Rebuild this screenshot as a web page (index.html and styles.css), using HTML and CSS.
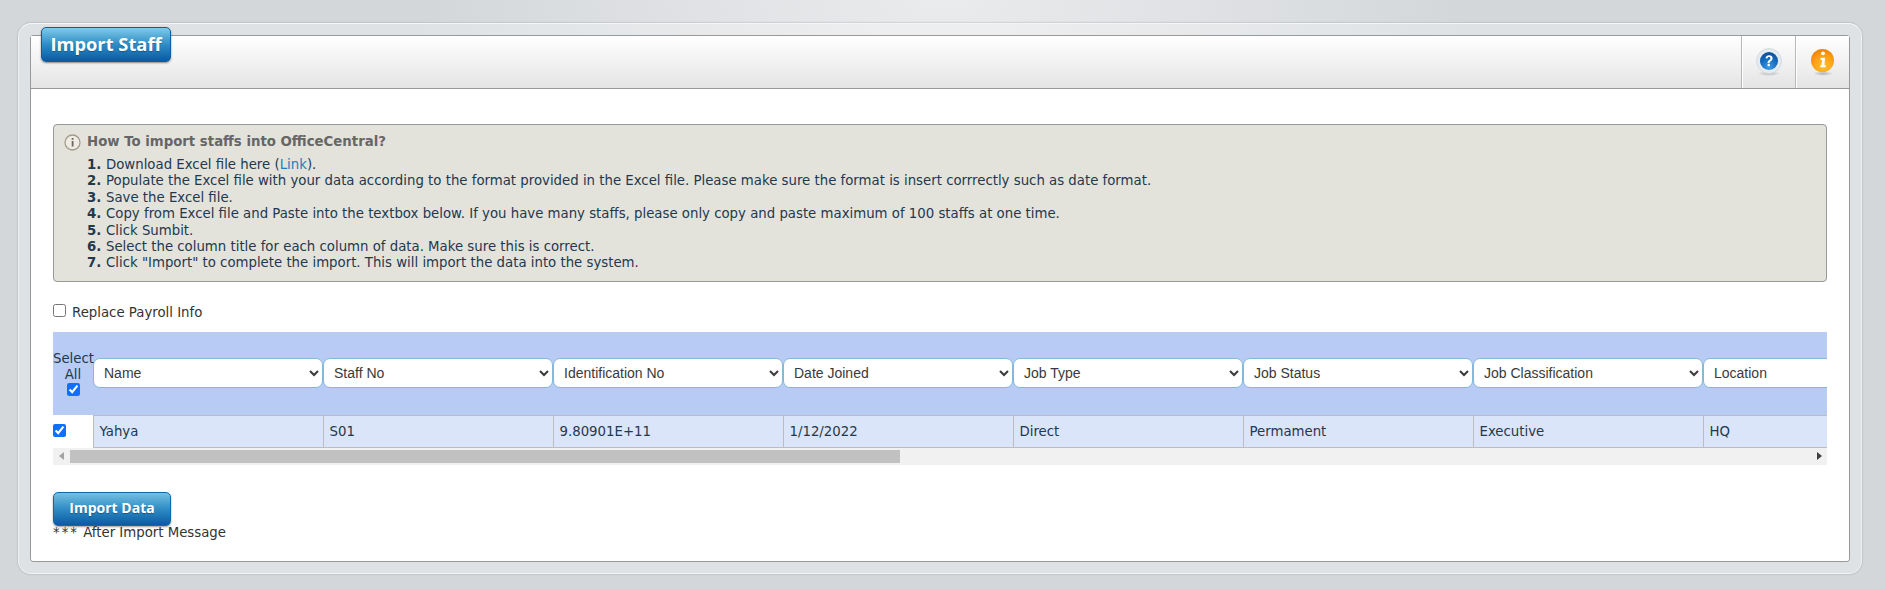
FILE: index.html
```html
<!DOCTYPE html>
<html lang="en">
<head>
<meta charset="utf-8">
<title>Import Staff</title>
<link rel="stylesheet" href="styles.css">
</head>
<body>
<div class="outer">
  <div class="panel">
    <h1 class="title">Import Staff</h1>
    <div class="head">
      <div class="tool">
        <svg width="26" height="28" viewBox="0 0 26 28">
          <defs>
            <radialGradient id="qb" cx="0.5" cy="0.85" r="0.8"><stop offset="0" stop-color="#3d9be8"/><stop offset="0.6" stop-color="#136cc0"/><stop offset="1" stop-color="#0d4f9c"/></radialGradient>
            <radialGradient id="sh" cx="0.5" cy="0.5" r="0.5"><stop offset="0" stop-color="#999" stop-opacity=".7"/><stop offset="1" stop-color="#999" stop-opacity="0"/></radialGradient>
          </defs>
          <ellipse cx="13" cy="25.500" rx="11" ry="2.500" fill="url(#sh)"/>
          <circle cx="13" cy="13" r="12.500" fill="#e6ebef" stroke="#d5dade" stroke-width="1"/>
          <circle cx="13" cy="13" r="9" fill="url(#qb)"/>
          <path d="M9.500 10.200c.3-2 1.800-3 3.600-3 2.100 0 3.500 1.200 3.500 3 0 1.500-.9 2.200-1.900 3-.8.6-1.100 1-1.100 2h-2c0-1.600.6-2.400 1.600-3.100.8-.6 1.200-1 1.200-1.700 0-.8-.6-1.300-1.400-1.300-.9 0-1.400.6-1.600 1.400z" fill="#fff"/>
          <rect x="11.600" y="16" width="2.200" height="2.200" fill="#fff"/>
        </svg>
      </div>
      <div class="tool">
        <svg width="26" height="28" viewBox="0 0 26 28">
          <defs>
            <radialGradient id="oc" cx="0.55" cy="0.75" r="0.8"><stop offset="0" stop-color="#ffc02e"/><stop offset="0.65" stop-color="#fb9a10"/><stop offset="1" stop-color="#e87a06"/></radialGradient>
            <radialGradient id="sh2" cx="0.5" cy="0.5" r="0.5"><stop offset="0" stop-color="#999" stop-opacity=".7"/><stop offset="1" stop-color="#999" stop-opacity="0"/></radialGradient>
          </defs>
          <ellipse cx="13" cy="25.500" rx="10" ry="2.500" fill="url(#sh2)"/>
          <circle cx="12.500" cy="12.500" r="11.500" fill="url(#oc)"/>
          <circle cx="13" cy="5.300" r="1.900" fill="#fff"/>
          <path d="M10.600 9.800h4.400l-.6 7.400h1.300v2.100h-5.400v-2.100h1.300l.4-5.300h-1.400z" fill="#fff"/>
        </svg>
      </div>
    </div>
    <div class="body">
      <div class="howto">
        <div class="howto-title">
          <svg class="howto-icon" width="17" height="17" viewBox="0 0 17 17">
            <circle cx="8.500" cy="8.500" r="7.500" fill="#eeece4" stroke="#a39c8b" stroke-width="1.300"/>
            <rect x="7.700" y="4" width="1.800" height="1.800" fill="#6f675a"/>
            <rect x="7.700" y="7" width="1.800" height="5.500" fill="#6f675a"/>
          </svg>
          <span>How To import staffs into OfficeCentral?</span>
        </div>
        <ol class="steps">
          <li>Download Excel file here (<a class="link" href="#">Link</a>).</li>
          <li>Populate the Excel file with your data according to the format provided in the Excel file. Please make sure the format is insert corrrectly such as date format.</li>
          <li>Save the Excel file.</li>
          <li>Copy from Excel file and Paste into the textbox below. If you have many staffs, please only copy and paste maximum of 100 staffs at one time.</li>
          <li>Click Sumbit.</li>
          <li>Select the column title for each column of data. Make sure this is correct.</li>
          <li>Click "Import" to complete the import. This will import the data into the system.</li>
        </ol>
      </div>
      <label class="replace"><input type="checkbox" class="check">Replace Payroll Info</label>
      <div class="scroller">
        <table class="grid">
          <colgroup>
            <col class="col-sel"><col class="col"><col class="col"><col class="col"><col class="col"><col class="col"><col class="col"><col class="col"><col class="col">
          </colgroup>
          <thead>
            <tr>
              <th class="sel-head">Select All<br><input type="checkbox" class="check" checked></th>
              <th><select class="pick"><option>Name</option></select></th>
              <th><select class="pick"><option>Staff No</option></select></th>
              <th><select class="pick"><option>Identification No</option></select></th>
              <th><select class="pick"><option>Date Joined</option></select></th>
              <th><select class="pick"><option>Job Type</option></select></th>
              <th><select class="pick"><option>Job Status</option></select></th>
              <th><select class="pick"><option>Job Classification</option></select></th>
              <th><select class="pick"><option>Location</option></select></th>
            </tr>
          </thead>
          <tbody>
            <tr>
              <td class="sel-cell"><input type="checkbox" class="check" checked></td>
              <td>Yahya</td><td>S01</td><td>9.80901E+11</td><td>1/12/2022</td><td>Direct</td><td>Permament</td><td>Executive</td><td>HQ</td>
            </tr>
          </tbody>
        </table>
      </div>
      <div class="hbar">
        <span class="arrow-left"></span>
        <div class="thumb"></div>
        <span class="arrow-right"></span>
      </div>
      <button class="import" type="button">Import Data</button>
      <div class="msg"><span class="stars">***</span> After Import Message</div>
    </div>
  </div>
</div>
</body>
</html>
```
FILE: styles.css
```css
* { box-sizing: border-box; }
html, body { margin: 0; height: 100%; }
body {
  background: #d4d7da radial-gradient(ellipse 520px 240px at 50% 0, #eaebed, #d4d7da);
  font-family: "DejaVu Sans", Verdana, sans-serif;
  font-size: 13.300px;
  color: #23384d;
  overflow: hidden;
}
.outer {
  margin: 23px 23px 0 18px;
  height: 551px;
  padding: 11px;
  background: #dfe2e5 radial-gradient(ellipse 520px 120px at 50% 0, #eeeff0, #dfe2e5);
  border-radius: 13px;
  border-top: 1px solid #f4f5f6;
  border-bottom: 1px solid #f2f3f4;
  border-left: 1px solid #eef0f1;
  border-right: 1px solid #eef0f1;
  box-shadow: 0 0 2px #9a9d9f;
}
.panel {
  position: relative;
  height: 100%;
  background: #fff;
  border: 1px solid #999;
  border-radius: 3px;
}
.title {
  position: absolute;
  left: 10px;
  top: -9px;
  margin: 0;
  width: 130px;
  height: 35px;
  line-height: 32px;
  text-align: center;
  font-family: "Open Sans", sans-serif;
  font-size: 18.300px;
  font-weight: 700;
  color: #fff;
  border-radius: 5px;
  border: 1px solid #0f5d9c;
  background: linear-gradient(#7ecbe8, #2f8cc4 50%, #0a5aa3);
  box-shadow: 0 1px 2px rgba(0,0,0,.45);
  text-shadow: 0 1px 1px rgba(0,0,0,.25);
}
.head {
  display: flex;
  justify-content: flex-end;
  height: 53px;
  background: linear-gradient(#fff, #e4e4e4);
  border-bottom: 1px solid #999;
}
.tool {
  width: 54px;
  display: flex;
  align-items: flex-start;
  justify-content: center;
  padding-top: 12px;
  border-left: 1px solid #b8b8b8;
  box-shadow: inset 1px 0 0 #fff;
}
.body { padding: 35px 22px 0 22px; }
.howto {
  height: 158px;
  background: #e3e3dc;
  border: 1px solid #999;
  border-radius: 4px;
  padding: 9px 0 0 10px;
  line-height: 16.400px;
}
.howto-title {
  display: flex;
  align-items: center;
  gap: 6px;
  font-weight: 700;
  color: #666;
  margin-bottom: 6px;
}
.steps {
  margin: 0;
  padding: 0 0 0 42px;
  list-style: none;
  counter-reset: step;
}
.steps li { counter-increment: step; position: relative; }
.steps li::before {
  content: counter(step) ".";
  font-weight: 700;
  position: absolute;
  left: -19px;
}
.link { color: #1a7fc1; text-decoration: none; }
.replace {
  display: flex;
  align-items: center;
  gap: 6px;
  margin: 20px 0 0;
  height: 20px;
  color: #333;
}
.replace .check { margin-bottom: 3px; }
.check { margin: 0; width: 13px; height: 13px; accent-color: #0f6fff; }
.scroller {
  margin-top: 10px;
  overflow: hidden;
}
.grid {
  border-collapse: collapse;
  table-layout: fixed;
  width: 1880px;
}
.col-sel { width: 40px; }
.col { width: 230px; }
.grid thead tr { height: 83px; background: #b7cbf4; }
.grid th { padding: 0; font-weight: 400; vertical-align: middle; }
.sel-head { text-align: center; line-height: 16px; padding-top: 4px !important; }
.pick {
  display: block;
  width: 100%;
  height: 30px;
  padding: 0 0 0 6px;
  background-color: #fff;
  border: 1px solid #85b9d9;
  border-radius: 7px;
  font-family: "Liberation Sans", Arial, sans-serif;
  font-size: 14px;
  color: #3a3a3a;
}
.grid tbody tr { height: 32px; }
.grid td {
  padding: 0 0 0 6px;
  background: #dbe5f9;
  border-top: 1px solid #bdbdbd;
  border-bottom: 1px solid #bdbdbd;
  border-left: 1px solid #bdbdbd;
}
.grid td.sel-cell { background: #fff; border: 0; padding: 0 0 2px; }
.sel-cell .check { display: block; }
.hbar {
  display: flex;
  align-items: center;
  height: 17px;
  background: #f1f1f1;
  padding: 0 5px;
}
.arrow-left, .arrow-right { width: 0; height: 0; border-top: 4px solid transparent; border-bottom: 4px solid transparent; }
.arrow-left { border-right: 5px solid #a3a3a3; margin-left: 1px; }
.arrow-right { border-left: 5px solid #404040; }
.thumb { flex: none; width: 830px; height: 13px; background: #c1c1c1; margin: 0 auto 0 6px; }
.import {
  display: block;
  width: 118px;
  height: 34px;
  margin-top: 27px;
  padding: 0 0 2px;
  font-family: "Open Sans", sans-serif;
  font-size: 14px;
  font-weight: 700;
  color: #fff;
  border: 1px solid #0f6aa8;
  border-radius: 5px;
  background: linear-gradient(#74c0e2, #2f8cc4 50%, #0a5aa3);
  box-shadow: 0 1px 2px rgba(0,0,0,.4);
  text-shadow: 0 1px 1px rgba(0,0,0,.3);
}
.msg { line-height: 16px; margin-top: -1px; color: #333; }
.stars { letter-spacing: 2px; }
```
